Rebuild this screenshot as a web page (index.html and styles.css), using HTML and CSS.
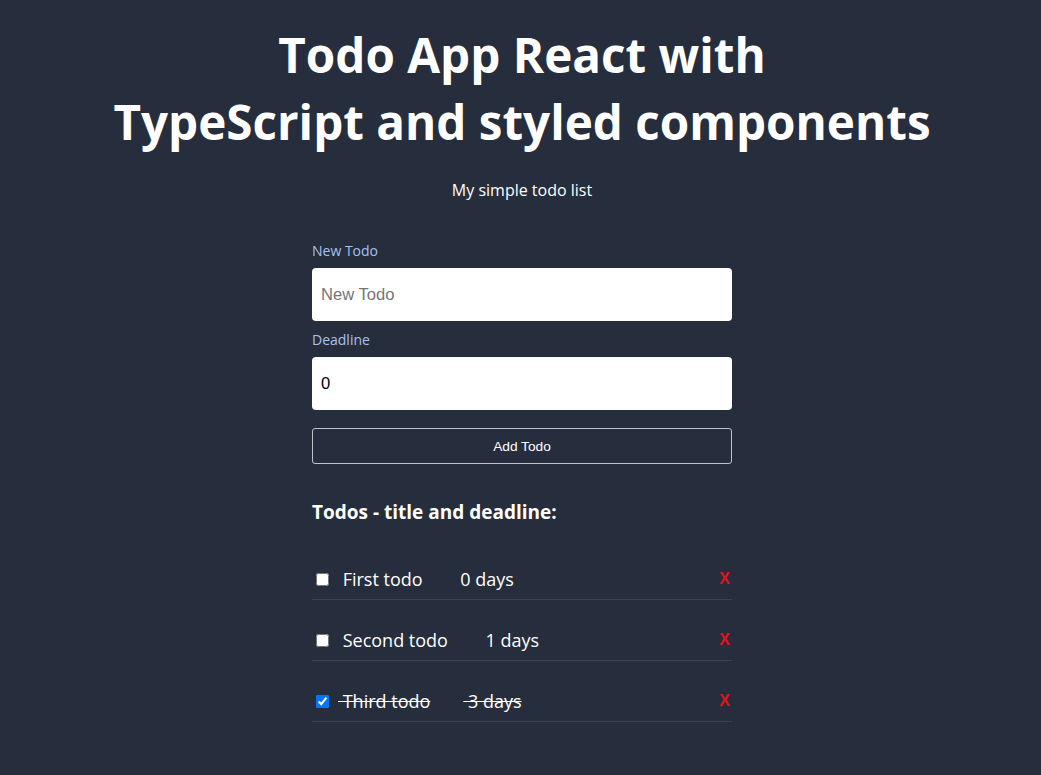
FILE: index.html
```html
<!DOCTYPE html>
<html lang="en">
<head>
<meta charset="utf-8">
<title>Todo App</title>
<link rel="stylesheet" href="styles.css">
</head>
<body>
<div class="app">
  <h1 class="title">Todo App React with<br>TypeScript and styled components</h1>
  <p class="subtitle">My simple todo list</p>
  <form class="form">
    <label class="label" for="todo">New Todo</label>
    <input class="field" id="todo" type="text" placeholder="New Todo">
    <label class="label" for="deadline">Deadline</label>
    <input class="field" id="deadline" type="number" value="0">
    <button class="add" type="button">Add Todo</button>
  </form>
  <section class="list">
    <h3 class="list-title">Todos - title and deadline:</h3>
    <div class="row">
      <input class="check" type="checkbox">
      <span class="name">&nbsp;First todo</span>
      <span class="days">&nbsp;0 days</span>
      <button class="del" type="button">X</button>
    </div>
    <div class="row">
      <input class="check" type="checkbox">
      <span class="name">&nbsp;Second todo</span>
      <span class="days">&nbsp;1 days</span>
      <button class="del" type="button">X</button>
    </div>
    <div class="row done">
      <input class="check" type="checkbox" checked>
      <span class="name">&nbsp;Third todo</span>
      <span class="days">&nbsp;3 days</span>
      <button class="del" type="button">X</button>
    </div>
  </section>
</div>
</body>
</html>
```
FILE: styles.css
```css
html, body {
  margin: 0;
  padding: 0;
}
body {
  background: #262d3c;
  color: #ffffff;
  font-family: "Open Sans", "Noto Sans", sans-serif;
}
.app {
  padding-left: 3px;
  display: flex;
  flex-direction: column;
  align-items: center;
}
.title {
  margin: 21px 0 0;
  font-size: 47.6px;
  line-height: 67px;
  font-weight: 700;
  text-align: center;
}
.subtitle {
  margin: 24px 0 0;
  font-size: 16px;
  line-height: 22px;
}
.form {
  width: 420px;
  margin-top: 40px;
  display: flex;
  flex-direction: column;
}
.label {
  font-size: 14px;
  line-height: 20px;
  color: #a6c1f2;
  margin-bottom: 7px;
}
.field {
  box-sizing: border-box;
  height: 53px;
  border: none;
  border-radius: 4px;
  padding: 0 9px;
  margin-bottom: 9px;
  font-family: "Liberation Sans", Arial, sans-serif;
  font-size: 16.6px;
  color: #000;
  background: #fff;
  outline: none;
}
.field::placeholder {
  color: #757575;
}
.add {
  margin-top: 9px;
  height: 36px;
  background: transparent;
  border: 1px solid #bfc3cb;
  border-radius: 3px;
  color: #fff;
  font-family: "Liberation Sans", Arial, sans-serif;
  font-size: 13.7px;
}
.list {
  width: 420px;
  margin-top: 36px;
}
.list-title {
  margin: 0;
  font-size: 19px;
  line-height: 24px;
  font-weight: 700;
}
.row {
  margin-top: 35px;
  height: 40px;
  display: flex;
  align-items: center;
  border-bottom: 1px solid #3b4353;
  font-size: 18px;
}
.row + .row {
  margin-top: 20px;
}
.check {
  margin: 0 3px 0 4px;
  width: 13px;
  height: 13px;
}
.name {
  margin-left: 6px;
}
.days {
  margin-left: 33px;
}
.done .name,
.done .days {
  text-decoration: line-through;
}
.del {
  margin-left: auto;
  margin-right: 2px;
  background: transparent;
  border: none;
  padding: 0;
  color: #e3121c;
  font-family: "Liberation Sans", Arial, sans-serif;
  font-weight: 700;
  font-size: 16px;
}
```
